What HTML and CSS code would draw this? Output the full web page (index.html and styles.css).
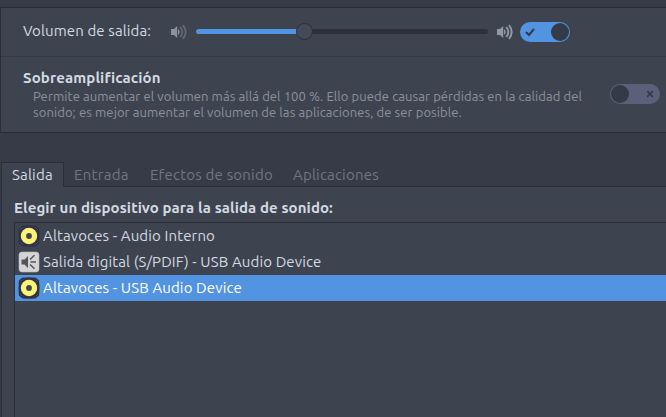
FILE: index.html
```html
<!DOCTYPE html>
<html lang="es">
<head>
<meta charset="utf-8">
<title>Sonido</title>
<link rel="stylesheet" href="styles.css">
</head>
<body>
<svg class="defs" width="0" height="0" aria-hidden="true">
  <symbol id="volume" viewBox="0 0 16 16">
    <path d="M0 5h3l3.200-3v12L3 11H0z"/>
    <path d="M7 5q3.400 3 0 6z"/>
    <path class="wave" d="M9.300 3q4 5 0 10M12 1.200q5.400 6.800 0 13.600" fill="none" stroke="currentColor" stroke-width="1.900"/>
  </symbol>
  <symbol id="speaker" viewBox="0 0 22 22">
    <path d="M4 .8Q11-.3 18 .8L21 3.500Q22 11 21 18.500L18 21.200Q11 22.300 4 21.200L1 18.500Q0 11 1 3.500z" fill="#2e3347"/>
    <path d="M2.500 4.500l2-2M17.500 2.500l2 2M2.500 17.500l2 2M17.500 19.500l2-2" stroke="#4c5162"/>
    <circle cx="11" cy="11" r="8.200" fill="#fdf372"/>
    <circle cx="11" cy="11" r="2.900" fill="#414450"/>
  </symbol>
  <symbol id="digital" viewBox="0 0 22 22">
    <rect x="1" y="1" width="20" height="20" rx="3" fill="#d5d5d5" stroke="#b9babd" stroke-width=".6"/>
    <path d="M3.500 8.500h3L10 5v12l-3.500-3.500h-3z" fill="#555"/>
    <path d="M12 8.500l4.500-4.300M12.500 11H18M12 13.500l4.500 4.300" stroke="#555" stroke-width="1.500"/>
  </symbol>
</svg>
<main class="window">
  <section class="panel">
    <div class="volume-row">
      <label class="volume-label">Volumen de salida:</label>
      <svg class="volume-icon low"><use href="#volume"/></svg>
      <div class="slider"><div class="fill"></div><div class="knob"></div></div>
      <svg class="volume-icon"><use href="#volume"/></svg>
      <div class="switch on">
        <svg viewBox="0 0 10 10"><path d="M1 5l3 3 5-6" stroke-width="2"/></svg>
        <i class="thumb"></i>
      </div>
    </div>
    <div class="boost-row">
      <div class="boost-text">
        <h2 class="title">Sobreamplificación</h2>
        <p class="hint">Permite aumentar el volumen más allá del 100 %. Ello puede causar pérdidas en la calidad del<br>sonido; es mejor aumentar el volumen de las aplicaciones, de ser posible.</p>
      </div>
      <div class="switch">
        <i class="thumb"></i>
        <svg viewBox="0 0 10 10"><path d="M2.200 2.200l5.600 5.600M7.800 2.200L2.200 7.800" stroke-width="1.700"/></svg>
      </div>
    </div>
  </section>
  <section class="notebook">
    <nav class="tabs">
      <span class="tab active">Salida</span>
      <span class="tab entrada">Entrada</span>
      <span class="tab efectos">Efectos de sonido</span>
      <span class="tab">Aplicaciones</span>
    </nav>
    <div class="page">
      <h2 class="list-title">Elegir un dispositivo para la salida de sonido:</h2>
      <ul class="devices">
        <li><svg><use href="#speaker"/></svg><span>Altavoces - Audio Interno</span></li>
        <li><svg><use href="#digital"/></svg><span>Salida digital (S/PDIF) - USB Audio Device</span></li>
        <li class="selected"><svg><use href="#speaker"/></svg><span>Altavoces - USB Audio Device</span></li>
      </ul>
    </div>
  </section>
</main>
</body>
</html>
```
FILE: styles.css
```css
* { box-sizing: border-box; }
body {
  margin: 0;
  height: 417px;
  overflow: hidden;
  background: #373b47;
  color: #d3dae3;
  font: 15px/20px Ubuntu, "Noto Sans", sans-serif;
  letter-spacing: .12px;
}
h2, p, ul { margin: 0; padding: 0; }
h2 { font-size: 15px; line-height: 20px; font-weight: 700; }
.defs { display: block; height: 0; }
.window { display: flex; flex-direction: column; height: 417px; padding-top: 7px; }
.panel {
  flex: none;
  height: 126px;
  border: 1px solid #2b2e39;
  border-right: 0;
  background: #3e444f;
}
.volume-row {
  display: flex;
  align-items: center;
  height: 49px;
  padding-left: 22px;
  border-bottom: 1px solid #353945;
}
.volume-label { width: 148px; padding-bottom: 2px; }
.volume-icon { width: 16px; height: 16px; color: #9299a5; fill: currentColor; }
.volume-icon.low { color: #8b919d; }
.low { --wave: .45; }
.wave { opacity: var(--wave, 1); }
.slider {
  position: relative;
  width: 292px;
  height: 5px;
  margin: -1px 9px 0;
  border-radius: 3px;
  background: #2d303b;
}
.fill { width: 108px; height: 5px; border-radius: 3px; background: #5294e2; }
.knob {
  position: absolute;
  left: 100px;
  top: -6px;
  width: 17px;
  height: 17px;
  border: 1px solid #2b2e39;
  border-radius: 50%;
  background: #444a58;
}
.switch {
  display: flex;
  align-items: center;
  justify-content: space-between;
  width: 50px;
  height: 20px;
  padding: 0 5px 0 1px;
  border-radius: 10px;
  background: #5b5f79;
}
.switch.on { margin-left: 7px; padding: 0 1px 0 5px; background: #5294e2; }
.thumb { width: 18px; height: 18px; border-radius: 50%; background: #353a47; }
.switch svg { width: 10px; height: 10px; fill: none; stroke: #353a47; }
.boost-row { display: flex; padding: 11px 0 0 22px; }
.boost-text { width: 587px; }
.title { letter-spacing: .14px; }
.hint {
  padding-left: 10px;
  color: #8c919d;
  font-size: 13px;
  line-height: 16px;
  letter-spacing: .095px;
  white-space: nowrap;
}
.boost-row .switch { margin-top: 16px; }
.notebook { flex: 1; display: flex; flex-direction: column; margin: 29px 0 0 1px; }
.tabs { display: flex; flex: none; height: 24px; position: relative; z-index: 1; }
.tab { height: 25px; padding: 3px 10px; color: #717681; letter-spacing: .2px; white-space: nowrap; }
.tab.active {
  width: 63px;
  border: 1px solid #2b2e39;
  border-bottom: 0;
  background: #3e444f;
  color: #d3dae3;
  padding-top: 2px;
}
.tab.entrada { width: 76px; letter-spacing: .3px; }
.tab.efectos { width: 143px; }
.page {
  flex: 1;
  padding: 11px 0 0 12px;
  border: solid #2b2e39;
  border-width: 1px 0 0 1px;
  background: #3e444f;
}
.list-title { letter-spacing: .1px; }
.devices {
  height: 204px;
  margin-top: 4px;
  border: solid #2b2e39;
  border-width: 1px 0 0 1px;
  list-style: none;
}
.devices li { display: flex; align-items: center; height: 26px; padding-left: 3px; letter-spacing: .13px; }
.devices svg { width: 22px; height: 22px; margin-right: 3px; }
.devices .selected { background: #5294e2; color: #fff; }
```
